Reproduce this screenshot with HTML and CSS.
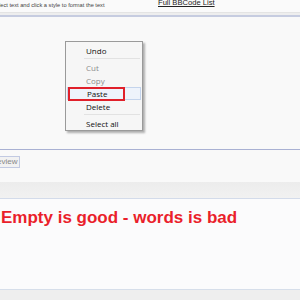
FILE: index.html
```html
<!DOCTYPE html>
<html lang="en">

<head>
    <meta charset="UTF-8">
    <meta name="viewport" content="width=device-width, initial-scale=1.0">
    <title>Post reply</title>
    <link rel="stylesheet" href="styles.css">
</head>

<body>
    <div class="hintbar">
        <span class="hint">Select text and click a style to format the text</span>
        <a class="bblink" href="#">Full BBCode List</a>
    </div>

    <div class="editor">
        <ul class="menu">
            <li class="item">Undo</li>
            <li class="sep"></li>
            <li class="item off">Cut</li>
            <li class="item off">Copy</li>
            <li class="item hot">Paste</li>
            <li class="item">Delete</li>
            <li class="sep"></li>
            <li class="item">Select all</li>
        </ul>
    </div>

    <div class="actions">
        <button class="btn">Preview</button>
    </div>

    <div class="band"></div>

    <div class="preview">
        <p class="warn">Empty is good - words is bad</p>
    </div>

    <div class="foot"></div>
</body>

</html>
```

FILE: styles.css
```css
body {
    margin: 0;
    width: 300px;
    height: 300px;
    overflow: hidden;
    background: #eeeeee;
    font-family: "Liberation Sans", Arial, sans-serif;
}

.hintbar {
    display: flex;
    align-items: flex-start;
    height: 12px;
    background: #fafafa;
    border-bottom: 1px solid #e4e4e4;
    overflow: hidden;
}

.hint {
    width: 113px;
    flex: none;
    margin-left: -8px;
    font-size: 5.7px;
    line-height: 10px;
    color: #444;
    white-space: nowrap;
}

.bblink {
    margin-left: 53px;
    margin-top: -2px;
    font-size: 7.6px;
    line-height: 10px;
    color: #222;
    white-space: nowrap;
}

.editor {
    position: relative;
    height: 132px;
    margin-top: 2px;
    background: #f9f9f9;
    border-top: 2px solid #c6cce0;
    border-bottom: 1px solid #a9b1d3;
}

.menu {
    position: absolute;
    left: 65px;
    top: 24px;
    width: 76px;
    margin: 0;
    padding: 2px 0 0;
    list-style: none;
    background: #f6f6f6;
    border: 1px solid #9a9a9a;
    box-shadow: 2px 2px 2px rgba(0, 0, 0, 0.3);
    font-family: "Open Sans", sans-serif;
    font-size: 8px;
}

.item {
    position: relative;
    height: 13px;
    line-height: 13px;
    padding-left: 20px;
    color: #111;
}

.off {
    color: #8c8c8c;
}

.hot {
    margin: 0 1px;
    padding-left: 19px;
    background: #eef3fb;
    border: 1px solid #c4d4ec;
    height: 11px;
    line-height: 11px;
}

.hot::after {
    content: "";
    position: absolute;
    left: 0;
    top: -1px;
    width: 53px;
    height: 10px;
    border: 2px solid #e0202a;
}

.sep {
    height: 1px;
    margin: 1px 2px 2px 18px;
    background: #e2e2e2;
}

.actions {
    height: 32px;
    background: #f9f9f9;
}

.btn {
    margin: 6px 0 0 -14px;
    height: 12px;
    padding: 0 2px;
    font-family: "Liberation Sans", Arial, sans-serif;
    font-size: 8px;
    line-height: 10px;
    color: #888;
    background: #f2f2f2;
    border: 1px solid #c2cae2;
}

.band {
    height: 16px;
    background: linear-gradient(#ececec, #f1f1f1);
}

.preview {
    height: 90px;
    background: #fbfbfc;
    border-top: 1px solid #d3dbea;
    border-bottom: 1px solid #d6deea;
}

.warn {
    margin: 9px 0 0 1px;
    font-size: 17px;
    font-weight: bold;
    color: #ea1f2b;
}

.foot {
    height: 10px;
}
```
